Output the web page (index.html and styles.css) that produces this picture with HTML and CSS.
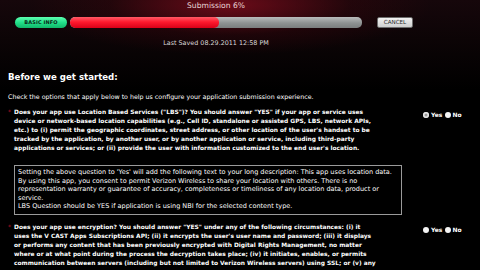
FILE: index.html
```html
<!DOCTYPE html>
<html>
<head>
<meta charset="utf-8">
<link rel="stylesheet" href="styles.css">
</head>
<body>
<div class="page">
  <header class="header">
    <div class="title">Submission 6%</div>
    <div class="controls">
      <span class="pill">BASIC INFO</span>
      <div class="bar"><div class="fill" style="width:51%"></div></div>
      <span class="cancel">CANCEL</span>
    </div>
    <div class="saved">Last Saved 08.29.2011 12:58 PM</div>
  </header>
  <main class="main">
    <h1 class="heading">Before we get started:</h1>
    <p class="intro">Check the options that apply below to help us configure your application submission experience.</p>

    <div class="q q1">
      <span class="star">*</span>
      <div class="qbody">
        <p class="qtext">Does your app use Location Based Services ("LBS")? You should answer "YES" if your app or service uses<br>device or network-based location capabilities (e.g., Cell ID, standalone or assisted GPS, LBS, network APIs,<br>etc.) to (i) permit the geographic coordinates, street address, or other location of the user's handset to be<br>tracked by the application, by another user, or by another application or service, including third-party<br>applications or services; or (ii) provide the user with information customized to the end user's location.</p>
        <div class="note">Setting the above question to 'Yes' will add the following text to your long description: This app uses location data.<br>By using this app, you consent to permit Verizon Wireless to share your location with others. There is no<br>representation warranty or guarantee of accuracy, completeness or timeliness of any location data, product or<br>service.<br>LBS Question should be YES if application is using NBI for the selected content type.</div>
      </div>
      <div class="choice"><span class="radio on"></span>Yes <span class="radio"></span>No</div>
    </div>

    <div class="q q2">
      <span class="star">*</span>
      <div class="qbody">
        <p class="qtext">Does your app use encryption? You should answer "YES" under any of the following circumstances: (i) it<br>uses the V CAST Apps Subscriptions API; (ii) it encrypts the user's user name and password; (iii) it displays<br>or performs any content that has been previously encrypted with Digital Rights Management, no matter<br>where or at what point during the process the decryption takes place; (iv) it initiates, enables, or permits<br>communication between servers (including but not limited to Verizon Wireless servers) using SSL; or (v) any</p>
      </div>
      <div class="choice"><span class="radio"></span>Yes <span class="radio"></span>No</div>
    </div>
  </main>
</div>
</body>
</html>
```

FILE: styles.css
```css
html, body {
  margin: 0;
  padding: 0;
  background: #000;
}
.page {
  width: 480px;
  height: 270px;
  overflow: hidden;
  font-family: "DejaVu Sans", Verdana, sans-serif;
  color: #fff;
  background:
    radial-gradient(ellipse 200px 50px at 230px 5px, rgba(130, 12, 28, 0.8), rgba(60, 5, 12, 0.35) 60%, rgba(0,0,0,0) 100%),
    linear-gradient(180deg, #16070b 0px, #080304 55px, #000 90px);
}
.header {
  padding: 1px 0 0 15px;
}
.title {
  margin-left: 55px;
  width: 292px;
  text-align: center;
  font-size: 7.6px;
  line-height: 10px;
  color: #e8d6d8;
}
.controls {
  display: flex;
  align-items: center;
  margin-top: 6px;
  height: 11px;
}
.pill {
  width: 52px;
  height: 11px;
  border-radius: 6px;
  background: linear-gradient(180deg, #5dffb0 0%, #22e08a 50%, #10b86a 100%);
  color: #0a2a18;
  font-size: 5px;
  font-weight: bold;
  line-height: 11px;
  text-align: center;
  letter-spacing: 0.1px;
}
.bar {
  margin-left: 3px;
  width: 292px;
  height: 11px;
  border-radius: 5px;
  background: linear-gradient(180deg, #b9bcbc 0%, #8e9292 55%, #7a7e7e 100%);
  overflow: hidden;
}
.fill {
  height: 100%;
  border-radius: 5px;
  background: linear-gradient(180deg, #ff5a66 0%, #ff1a2e 45%, #d90018 100%);
}
.cancel {
  margin-left: 15px;
  width: 34px;
  height: 9px;
  border: 1px solid #6c6c6c;
  border-radius: 2px;
  background: linear-gradient(180deg, #f2f2f2, #cfcfcf);
  color: #2a2a2a;
  font-size: 5.6px;
  line-height: 9px;
  text-align: center;
}
.saved {
  margin-left: 55px;
  margin-top: 10px;
  width: 292px;
  text-align: center;
  font-size: 6.4px;
  line-height: 10px;
  color: #d8d8d8;
}
.main {
  padding-left: 8px;
}
.heading {
  margin: 23px 0 0 0;
  font-size: 8.6px;
  line-height: 13px;
  font-weight: bold;
}
.intro {
  margin: 8px 0 0 0;
  font-size: 6.3px;
  line-height: 9px;
}
.q {
  display: flex;
  align-items: flex-start;
}
.q1 {
  margin-top: 7px;
}
.q2 {
  margin-top: 8.5px;
}
.star {
  width: 6px;
  color: #c0102a;
  font-size: 6px;
  line-height: 8px;
}
.qbody {
  width: 388px;
}
.qtext {
  margin: 0;
  font-size: 5.9px;
  line-height: 9px;
  font-weight: bold;
  white-space: nowrap;
}
.note {
  margin-top: 11.5px;
  border: 1px solid #9a9a9a;
  padding: 2.75px 4px 3px 3px;
  font-size: 6.5px;
  line-height: 8.5px;
  white-space: nowrap;
}
.choice {
  margin-left: 21px;
  margin-top: 2px;
  display: flex;
  align-items: center;
  font-size: 6px;
  line-height: 9px;
  font-weight: bold;
  white-space: pre;
}
.radio {
  display: inline-block;
  width: 6px;
  height: 6px;
  border-radius: 50%;
  background: #f4f4f4;
  margin-right: 2px;
}
.radio.on {
  background: #9a9a9a;
  box-shadow: inset 0 0 0 1.5px #e8e8e8;
}
```
